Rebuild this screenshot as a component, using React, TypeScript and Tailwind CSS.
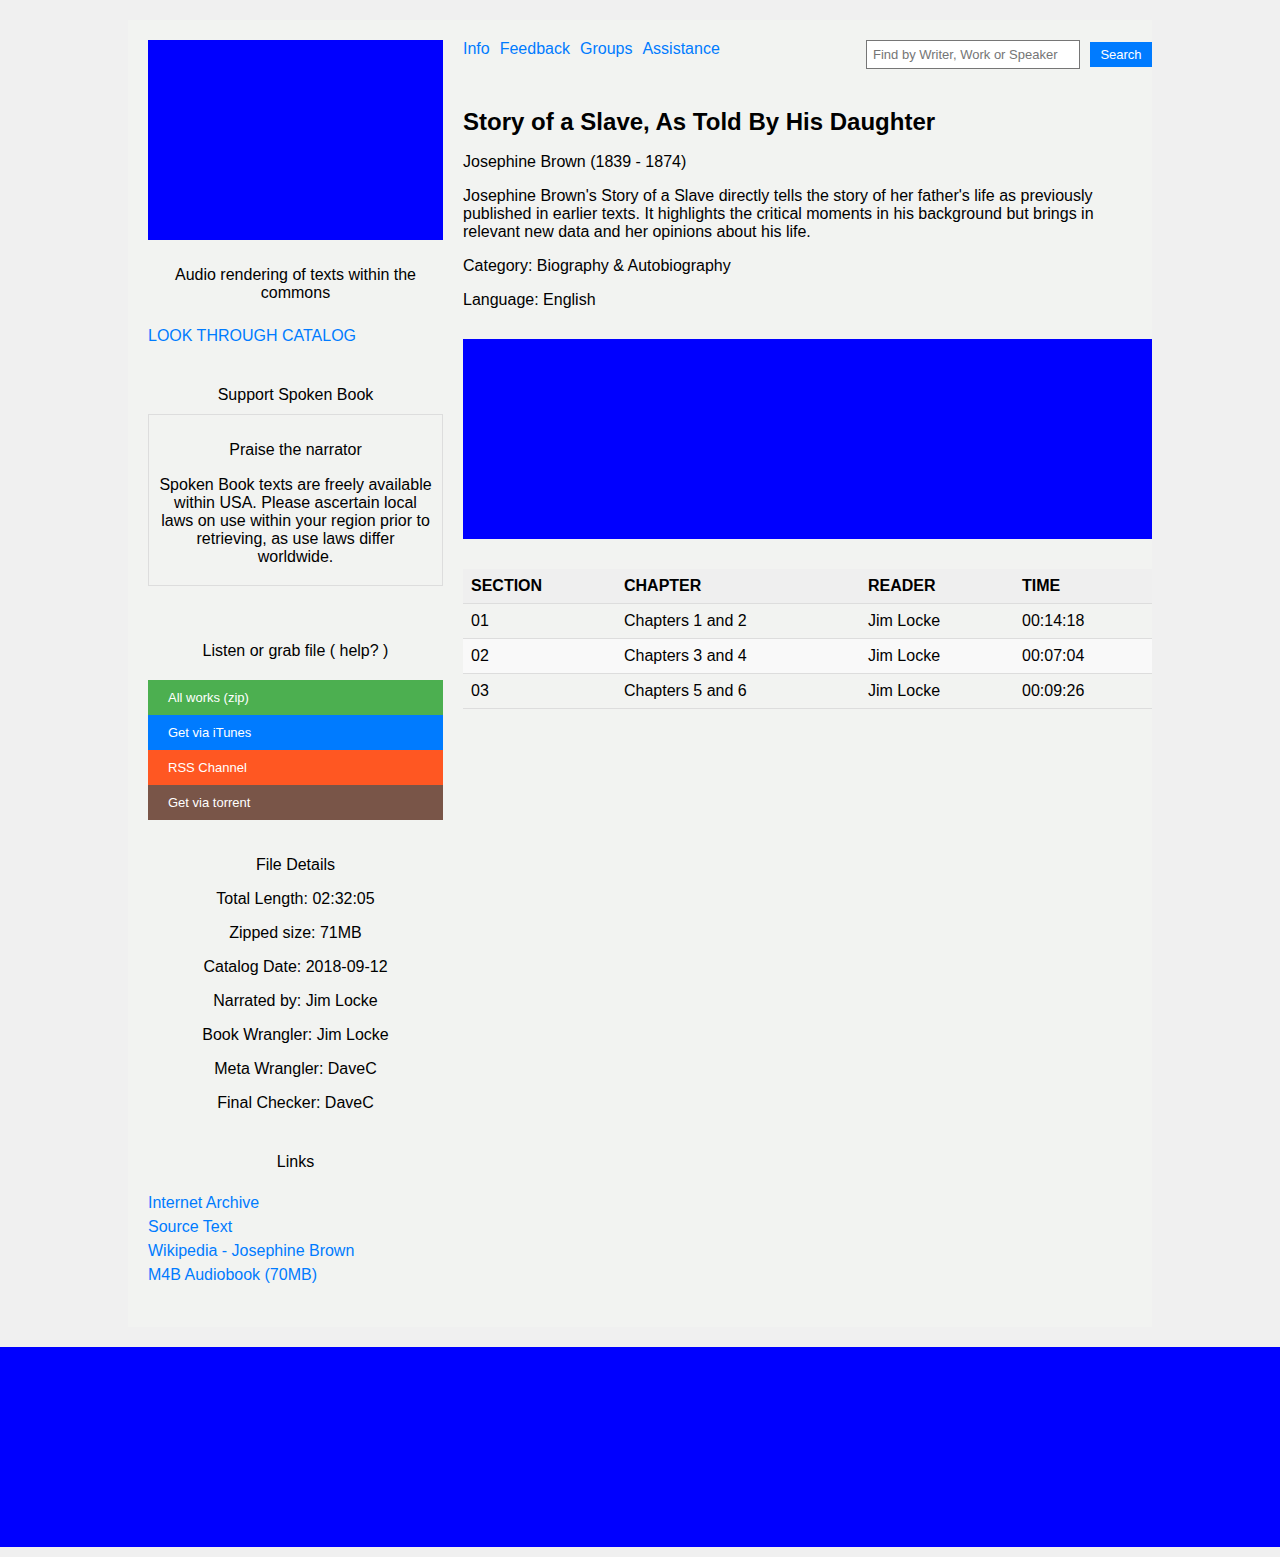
const rows = [
  { section: "01", chapter: "Chapters 1 and 2", reader: "Jim Locke", time: "00:14:18" },
  { section: "02", chapter: "Chapters 3 and 4", reader: "Jim Locke", time: "00:07:04" },
  { section: "03", chapter: "Chapters 5 and 6", reader: "Jim Locke", time: "00:09:26" },
];

const details = [
  "Total Length: 02:32:05",
  "Zipped size: 71MB",
  "Catalog Date: 2018-09-12",
  "Narrated by: Jim Locke",
  "Book Wrangler: Jim Locke",
  "Meta Wrangler: DaveC",
  "Final Checker: DaveC",
];

export default function App() {
  return (
    <div className="min-h-[1557px] bg-[#f0f0f0] pt-[20px] pb-[10px] text-[16px] leading-[18px] text-black font-['Liberation_Sans',Arial,sans-serif]">
      <div className="mx-auto flex w-[1024px] gap-[20px] bg-[#f2f3f1] pl-[20px] pt-[20px] pb-[41px]">
        {/* Sidebar */}
        <aside className="w-[295px] shrink-0">
          <div className="h-[200px] bg-[#0000ff]"></div>
          <p className="mt-[26px] px-[20px] text-center">Audio rendering of texts within the commons</p>
          <a className="mt-[25px] block text-[#007bff]">LOOK THROUGH CATALOG</a>

          <h3 className="mt-[41px] text-center">Support Spoken Book</h3>
          <div className="mt-[10px] border border-[#dddddd] px-[10px] pt-[26px] pb-[19px] text-center">
            <p>Praise the narrator</p>
            <p className="mt-[17px]">
              Spoken Book texts are freely available within USA. Please ascertain local laws on use within your region prior to retrieving, as use laws differ worldwide.
            </p>
          </div>

          <h3 className="mt-[56px] text-center">Listen or grab file ( help? )</h3>
          <div className="mt-[20px] flex flex-col text-[13px] text-white">
            <a className="flex h-[35px] items-center bg-[#4caf50] pl-[20px]">All works (zip)</a>
            <a className="flex h-[35px] items-center bg-[#007bff] pl-[20px]">Get via iTunes</a>
            <a className="flex h-[35px] items-center bg-[#ff5722] pl-[20px]">RSS Channel</a>
            <a className="flex h-[35px] items-center bg-[#795548] pl-[20px]">Get via torrent</a>
          </div>

          <h3 className="mt-[36px] text-center">File Details</h3>
          <div className="mt-[16px] flex flex-col gap-[16px] text-center">
            {details.map((d) => (
              <p key={d}>{d}</p>
            ))}
          </div>

          <h3 className="mt-[41px] text-center">Links</h3>
          <ul className="mt-[20px] mb-[-1px] leading-[24px] text-[#007bff]">
            <li>Internet Archive</li>
            <li>Source Text</li>
            <li>Wikipedia - Josephine Brown</li>
            <li>M4B Audiobook (70MB)</li>
          </ul>
        </aside>

        {/* Main */}
        <main className="flex-1">
          <div className="flex h-[29px] items-start justify-between">
            <nav className="flex gap-[10px] text-[#007bff]">
              <a>Info</a>
              <a>Feedback</a>
              <a>Groups</a>
              <a>Assistance</a>
            </nav>
            <div className="flex items-start gap-[10px]">
              <input
                className="h-[29px] w-[214px] border border-[#767676] bg-white px-[6px] text-[13px] text-black placeholder:text-[#757575] outline-none"
                placeholder="Find by Writer, Work or Speaker"
              />
              <button className="mt-[2px] h-[25px] w-[62px] bg-[#007bff] text-[13px] text-white">Search</button>
            </div>
          </div>

          <h1 className="mt-[39px] text-[24px] leading-[28px] font-bold">Story of a Slave, As Told By His Daughter</h1>
          <p className="mt-[17px]">Josephine Brown (1839 - 1874)</p>
          <p className="mt-[16px]">
            Josephine Brown's Story of a Slave directly tells the story of her father's life as previously published in earlier texts. It highlights the critical moments in his background but brings in relevant new data and her opinions about his life.
          </p>
          <p className="mt-[16px]">Category: Biography &amp; Autobiography</p>
          <p className="mt-[16px]">Language: English</p>

          <div className="mt-[30px] h-[200px] bg-[#0000ff]"></div>

          <table className="mt-[30px] w-full border-collapse text-left">
            <thead>
              <tr className="h-[34px] border-b border-[#dddddd] bg-[#efefef]">
                <th className="w-[153px] px-[8px] font-bold">SECTION</th>
                <th className="w-[244px] px-[8px] font-bold">CHAPTER</th>
                <th className="w-[154px] px-[8px] font-bold">READER</th>
                <th className="px-[8px] font-bold">TIME</th>
              </tr>
            </thead>
            <tbody>
              {rows.map((r, i) => (
                <tr key={r.section} className={"h-[35px] border-b border-[#dddddd] " + (i === 1 ? "bg-[#f9f9f9]" : "")}>
                  <td className="px-[8px]">{r.section}</td>
                  <td className="px-[8px]">{r.chapter}</td>
                  <td className="px-[8px]">{r.reader}</td>
                  <td className="px-[8px]">{r.time}</td>
                </tr>
              ))}
            </tbody>
          </table>
        </main>
      </div>

      <footer className="mt-[20px] h-[200px] bg-[#0000ff]"></footer>
    </div>
  );
}
